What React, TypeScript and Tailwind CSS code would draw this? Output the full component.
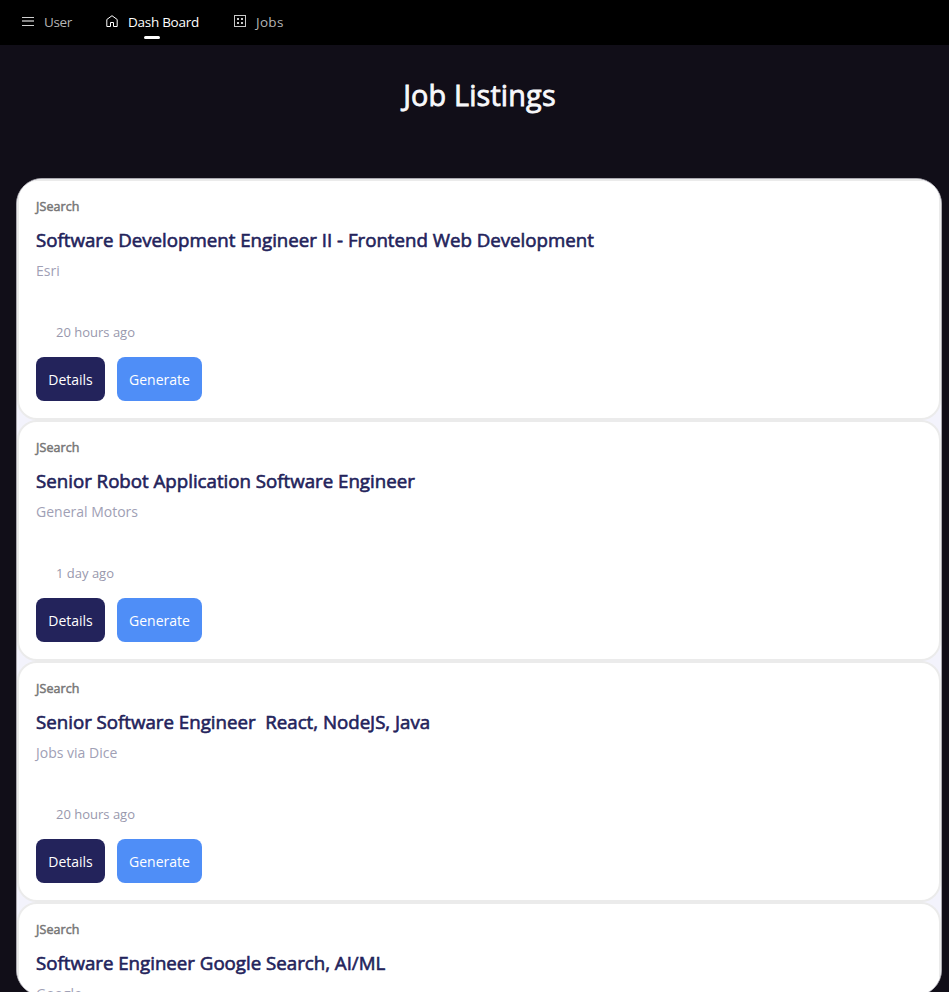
type Job = { title: string; company: string; posted: string };

const jobs: Job[] = [
  { title: "Software Development Engineer II - Frontend Web Development", company: "Esri", posted: "20 hours ago" },
  { title: "Senior Robot Application Software Engineer", company: "General Motors", posted: "1 day ago" },
  { title: "Senior Software Engineer  React, NodeJS, Java", company: "Jobs via Dice", posted: "20 hours ago" },
  { title: "Software Engineer Google Search, AI/ML", company: "Google", posted: "1 day ago" },
];

function MenuIcon() {
  return (
    <svg width="12" height="10" viewBox="0 0 12 10" shapeRendering="crispEdges">
      <path d="M0 .5h12M0 8.5h12" stroke="#d0d0d0" />
      <path d="M0 4h12" stroke="#858585" strokeWidth="2" />
    </svg>
  );
}

function HomeIcon() {
  return (
    <svg width="12" height="12" viewBox="0 0 12 12" fill="none" stroke="#fff">
      <path d="M.8 11.500V4.500L6 .7l5.200 3.800V11.500H7.500V7.500h-3v4z" />
    </svg>
  );
}

function GridIcon() {
  return (
    <svg width="12" height="12" viewBox="0 0 12 12" fill="none" shapeRendering="crispEdges">
      <path d="M.5.5h11v11H.5z" stroke="#c8c8c8" />
      <path d="M3 3h2v2H3zM7 3h2v2H7zM3 7h2v2H3zM7 7h2v2H7z" fill="#c8c8c8" />
    </svg>
  );
}

function JobCard({ job }: { job: Job }) {
  return (
    <article className="h-[241px] shrink-0 rounded-[20px] border-2 border-[#ebebeb] bg-white pl-[17px] pt-4">
      <p className="h-5 text-[12.480px] leading-5 tracking-[0.1px] text-[#777] [-webkit-text-stroke:0.5px_#777]">JSearch</p>
      <h2 className="mt-[9px] h-7 whitespace-pre text-[18.720px] font-normal leading-7 tracking-[-0.015px] text-[#23235b] [-webkit-text-stroke:0.6px_#23235b]">{job.title}</h2>
      <p className="mt-[7px] h-5 text-[14px] leading-5 text-[#a0a0b5]">{job.company}</p>
      <p className="ml-5 mt-[41px] h-5 text-[13px] leading-5 text-[#9898ad]">{job.posted}</p>
      <div className="mt-[15px] flex gap-3">
        <button className="h-11 w-[69px] rounded-lg bg-[#23235b] text-[14px] text-white">Details</button>
        <button className="h-11 w-[85px] rounded-lg bg-[#4f8ef7] text-[14px] text-white">Generate</button>
      </div>
    </article>
  );
}

export default function App() {
  return (
    <div className="flex h-[992px] flex-col overflow-hidden bg-[#110e18] font-['Open_Sans',sans-serif]">
      <nav className="flex h-[45px] shrink-0 bg-black pl-[22px] text-[13.500px] leading-5 text-[#b5b5b5]">
        <div className="flex w-[84px] pt-3">
          <span className="w-[22px] pt-[5px]"><MenuIcon /></span>
          <span className="tracking-[-0.350px]">User</span>
        </div>
        <div className="relative flex w-[128px] pt-3 text-white">
          <span className="w-[22px] pt-[3px]"><HomeIcon /></span>
          <span className="whitespace-nowrap tracking-[-0.270px]">Dash Board</span>
          <i className="absolute left-[38px] top-9 h-[3px] w-4 rounded-full bg-white" />
        </div>
        <div className="flex pt-3">
          <span className="w-[22px] pt-[3px]"><GridIcon /></span>
          <span className="tracking-[0.3px]">Jobs</span>
        </div>
      </nav>
      <h1 className="mt-[30px] h-10 shrink-0 pl-[10px] text-center text-[28.800px] font-normal leading-10 tracking-[0.15px] text-[#f8f8fb] [-webkit-text-stroke:0.8px_#f8f8fb]">Job Listings</h1>
      <main className="ml-4 mt-[63px] flex h-[818px] w-[926px] shrink-0 flex-col overflow-hidden rounded-[26px] border border-[#aaa8af] bg-[#f3f3fc]">
        {jobs.map((job) => <JobCard key={job.title} job={job} />)}
      </main>
    </div>
  );
}
